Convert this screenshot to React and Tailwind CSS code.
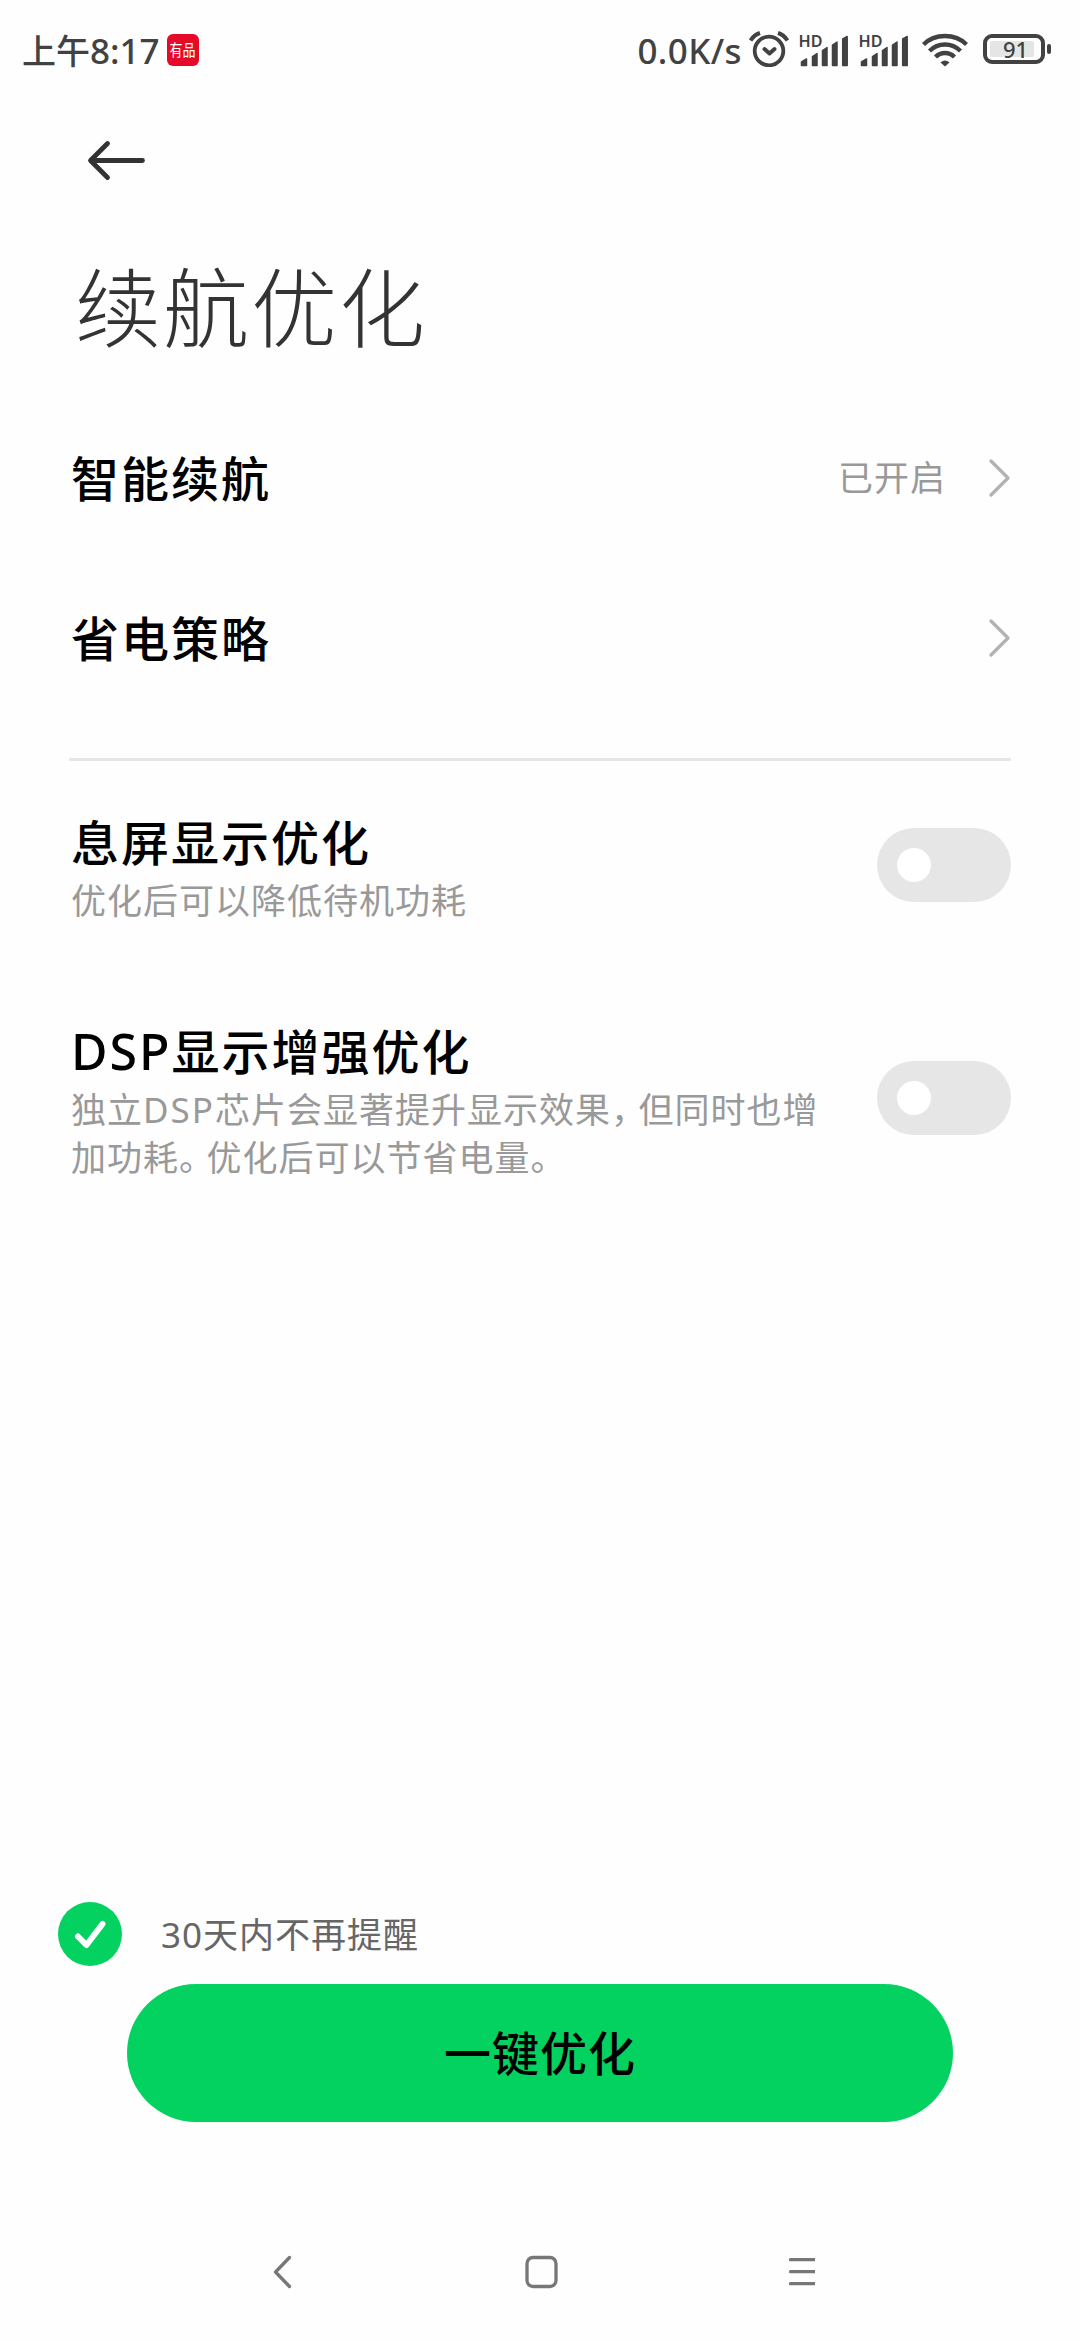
import { useState } from "react";

function Signal() {
    return (
        <svg className="w-[52px] h-[36px] overflow-visible" viewBox="0 -2 52 36" fill="#424242">
            <text
                x="-0.500"
                y="13"
                fontSize="16"
                fontWeight="600"
                fontFamily="Noto Sans, sans-serif"
                textLength="24"
                lengthAdjust="spacingAndGlyphs"
            >
                HD
            </text>
            <g stroke="#424242" strokeLinejoin="round" strokeWidth="1.500">
                <path d="M2.500 31.500v-3.500l5-3v6.500z" />
                <path d="M13.500 31.500V22.500l4.500-3v12z" />
                <path d="M23.500 31.500V16.500l4.500-3v18z" />
                <path d="M33.500 31.500V11l4.500-3v23.500z" />
                <path d="M43.700 31.500V5l4.500-2.500v29z" />
            </g>
        </svg>
    );
}

function StatusBar() {
    return (
        <header className="h-[100px] shrink-0 flex items-center justify-between pl-[22px] pr-[28px] text-[#424242]">
            <div className="flex items-center">
                <span className="text-[34px] leading-none font-medium">上午</span>
                <span className="text-[35px] leading-none font-medium font-['Noto_Sans']">
                    8:17
                </span>
                <span className="w-8 h-8 -mt-px ml-[7px] rounded-[6px] bg-[#e60a28] text-white text-[13px] flex items-center justify-center">
                    <span className="scale-y-125">有品</span>
                </span>
            </div>
            <div className="flex items-center">
                <span className="text-[35px] leading-none font-medium font-['Noto_Sans'] tracking-[0.4px] mr-[7px]">
                    0.0K/s
                </span>
                {/* Alarm */}
                <svg
                    className="w-10 h-9 mr-[10px] -mt-[3px]"
                    viewBox="0 0 40 36"
                    fill="none"
                    stroke="#424242"
                    strokeLinecap="round"
                    strokeLinejoin="round"
                >
                    <circle cx="20" cy="20" r="14.300" strokeWidth="3.800" />
                    <path strokeWidth="4" d="M15.500 18l5 4.500 5-4.500" />
                    <path strokeWidth="4" strokeLinecap="butt" d="M1.500 9.500Q5 4 11 2M38.500 9.500Q35 4 29 2" />
                </svg>
                <Signal />
                <div className="w-2" />
                <Signal />
                {/* Wifi */}
                <svg
                    className="w-[46px] h-[34px] ml-[11px]"
                    viewBox="0 0 46 34"
                    fill="none"
                    stroke="#424242"
                    strokeWidth="4.300"
                >
                    <path d="M1.500 11.500Q10 3 23 3t21.500 8.500" />
                    <path d="M7.500 18Q14 11.500 23 11.500T38.500 18" />
                    <path d="M13.500 24Q17.500 20 23 20t9.500 4" />
                    <path
                        d="M18.500 29.500Q23 25.500 27.500 29.500L23 33.500z"
                        fill="#424242"
                        stroke="none"
                    />
                </svg>
                {/* Battery */}
                <svg className="w-[69px] h-[30px] ml-[15px] -mt-[2px]" viewBox="0 0 69 30">
                    <rect x="2" y="2" width="58" height="26" rx="7" fill="none" stroke="#424242" strokeWidth="4" />
                    <rect x="7" y="7" width="44" height="16" rx="2" fill="#e5e5e5" />
                    <rect x="64" y="10" width="4" height="10" rx="2" fill="#424242" />
                    <text
                        x="20"
                        y="23.500"
                        fontSize="22"
                        fontWeight="500"
                        fontFamily="Noto Sans, sans-serif"
                        fill="#424242"
                    >
                        91
                    </text>
                </svg>
            </div>
        </header>
    );
}

function LinkRow({ title, value }) {
    return (
        <button type="button" className="w-full h-[160px] flex items-center text-left">
            <span className="flex-1 pb-1 text-[48px] tracking-[2px] font-medium">{title}</span>
            {value && (
                <span className="pb-1 text-[35px] tracking-[1px] text-[#999999] mr-[42px]">
                    {value}
                </span>
            )}
            <svg
                className="w-[22px] h-[38px] mr-px"
                viewBox="0 0 22 38"
                fill="none"
                stroke="#b2b2b2"
                strokeWidth="3.200"
                strokeLinecap="round"
                strokeLinejoin="round"
            >
                <path d="M3 2l17 17L3 36" />
            </svg>
        </button>
    );
}

function Toggle({ checked, onChange }) {
    return (
        <button
            type="button"
            role="switch"
            aria-checked={checked}
            onClick={() => onChange(!checked)}
            className={`w-[134px] h-[74px] shrink-0 rounded-full px-5 flex items-center ${
                checked ? "bg-[#03d260] justify-end" : "bg-[#e6e6e6] justify-start"
            }`}
        >
            <span className="w-[34px] h-[34px] rounded-full bg-white" />
        </button>
    );
}

// Half-width form of the full-width punctuation, with a little air after it
function Mark({ children }) {
    return <span className="mr-[9px] [font-feature-settings:'halt']">{children}</span>;
}

export default function App() {
    const [aod, setAod] = useState(false);
    const [dsp, setDsp] = useState(false);
    const [remind, setRemind] = useState(true);

    return (
        <div
            lang="zh-CN"
            className="w-[1080px] h-[2340px] bg-[#fefefe] text-black flex flex-col font-['Noto_Sans_CJK_SC',sans-serif]"
        >
            <StatusBar />

            {/* Header */}
            <div className="pl-[86px] pt-[40px]">
                <svg
                    className="w-[62px] h-[42px]"
                    viewBox="0 0 62 42"
                    fill="none"
                    stroke="#333333"
                    strokeWidth="4.800"
                    strokeLinecap="round"
                    strokeLinejoin="round"
                >
                    <path d="M21.500 3.500L4.500 20.500l17 17M5 20.500h51.500" />
                </svg>
            </div>
            <h1 className="pl-[75px] mt-[62px] h-[120px] leading-[120px] text-[86px] tracking-[2px] font-light text-[#333333]">
                续航优化
            </h1>

            <main className="pl-[69px] pr-[69px] mt-[34px] flex-1">
                <div className="pl-[2px]">
                    <LinkRow title="智能续航" value="已开启" />
                    <LinkRow title="省电策略" />
                </div>
                <div className="h-[3px] mt-10 bg-[#e6e6e6]" />

                <div className="flex justify-between pl-[2px] pt-[47px]">
                    <div>
                        <h2 className="text-[48px] leading-[64px] tracking-[2px] font-medium">
                            息屏显示优化
                        </h2>
                        <p className="mt-[3px] text-[35px] leading-[48px] tracking-[1px] text-[#999999]">
                            优化后可以降低待机功耗
                        </p>
                    </div>
                    <div className="pt-[20px]">
                        <Toggle checked={aod} onChange={setAod} />
                    </div>
                </div>

                <div className="flex justify-between pl-[2px] pt-[94px]">
                    <div className="w-[760px]">
                        <h2 className="text-[48px] leading-[64px] tracking-[2px] font-medium">
                            <span className="font-['Noto_Sans'] text-[50px] tracking-[2px] leading-none">DSP</span>
                            显示增强优化
                        </h2>
                        <p className="mt-[3px] text-[35px] leading-[48px] tracking-[1px] text-[#999999]">
                            独立
                            <span className="font-['Noto_Sans'] text-[35px] tracking-[2px] leading-none">DSP</span>
                            芯片会显著提升显示效果<Mark>，</Mark>但同时也增加功耗<Mark>。</Mark>
                            优化后可以节省电量。
                        </p>
                    </div>
                    <div className="pt-[44px]">
                        <Toggle checked={dsp} onChange={setDsp} />
                    </div>
                </div>
            </main>

            {/* Bottom actions */}
            <label className="relative flex items-center h-16 ml-[58px] mb-[18px]">
                <input
                    type="checkbox"
                    className="sr-only"
                    checked={remind}
                    onChange={(e) => setRemind(e.target.checked)}
                />
                <svg className="w-16 h-16" viewBox="0 0 64 64">
                    <circle cx="32" cy="32" r="32" fill={remind ? "#03d260" : "#e6e6e6"} />
                    <path
                        d="M20 34.500l8.500 8.500 16-21"
                        fill="none"
                        stroke="#ffffff"
                        strokeWidth="6"
                        strokeLinecap="round"
                        strokeLinejoin="round"
                    />
                </svg>
                <span className="ml-[39px] pt-px text-[35px] tracking-[1px] text-[#666666]">
                    <span className="font-['Noto_Sans'] text-[35px] tracking-[1px]">30</span>
                    天内不再提醒
                </span>
            </label>
            <button
                type="button"
                className="mx-[127px] h-[138px] pb-[3px] shrink-0 rounded-full bg-[#03d260] text-[47px] tracking-[1px] font-medium"
            >
                一键优化
            </button>

            {/* Navigation bar */}
            <nav className="h-[218px] shrink-0 pt-[132px] flex justify-center">
                <svg
                    className="w-[550px] h-[36px]"
                    viewBox="0 0 550 36"
                    fill="none"
                    stroke="#777777"
                    strokeWidth="3.300"
                    strokeLinecap="round"
                    strokeLinejoin="round"
                >
                    <path d="M24.500 3.500L10.500 18l14 14.500" />
                    <rect x="262" y="3.500" width="29" height="29" rx="6" />
                    <path d="M525.500 5.700h27M525.500 17.700h27M525.500 29.700h27" />
                </svg>
            </nav>
        </div>
    );
}
